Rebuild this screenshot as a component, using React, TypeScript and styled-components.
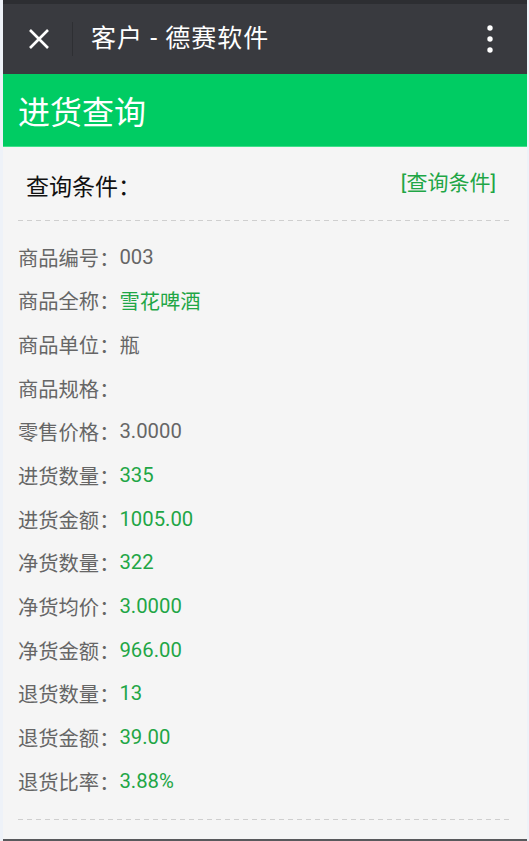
import React from 'react';
import styled, { createGlobalStyle } from 'styled-components';

const GlobalStyle = createGlobalStyle`
  html, body {
    margin: 0;
    padding: 0;
    background: #eef2f8;
  }
  body {
    font-family: Roboto, "Noto Sans CJK SC", "Noto Sans", sans-serif;
  }
`;

const Frame = styled.div`
  box-sizing: border-box;
  height: 841px;
  margin: 0 2px 0 3px;
  width: 524px;
  display: flex;
  flex-direction: column;
  background: #f5f5f5;
  border-bottom: 2px solid #58595c;
  overflow: hidden;
`;

const Toolbar = styled.div`
  box-sizing: border-box;
  height: 74px;
  flex-shrink: 0;
  background: #393a3f;
  border-top: 4px solid #2d2e32;
  display: flex;
  align-items: center;
  padding: 0 22px 0 21px;
`;

const IconButton = styled.div`
  width: 30px;
  height: 30px;
  display: flex;
  align-items: center;
  justify-content: center;
`;

const Divider = styled.div`
  width: 1px;
  height: 34px;
  background: #2e2f33;
  margin: 0 18px 0 18px;
`;

const ToolbarTitle = styled.div`
  flex: 1;
  color: #ffffff;
  font-size: 25px;
  line-height: 30px;
  letter-spacing: 1px;
`;

const PageHeader = styled.div`
  box-sizing: border-box;
  height: 73px;
  flex-shrink: 0;
  background: #00cc63;
  color: #ffffff;
  font-size: 32px;
  display: flex;
  align-items: center;
  padding: 0 15px 0 15px;
  border-bottom: 1px solid #3ee08a;
`;

const Content = styled.div`
  padding: 0 15px 0 15px;
`;

const ConditionBar = styled.div`
  display: flex;
  align-items: center;
  justify-content: space-between;
  height: 73px;
  padding: 0 16px 0 8px;
`;

const ConditionTitle = styled.div`
  font-size: 23px;
  color: #111111;
  margin-top: 2px;
`;

const ConditionLink = styled.a`
  font-size: 21px;
  color: #1fa646;
  text-decoration: none;
  margin-top: -6px;
`;

const Dashed = styled.div`
  height: 1px;
  background-image: linear-gradient(to right, #cfcfcf 55%, transparent 55%);
  background-size: 9px 1px;
  background-repeat: repeat-x;
`;

const InfoList = styled.div`
  display: flex;
  flex-direction: column;
  padding: 14px 0 16px 0;
`;

const Row = styled.div`
  height: 43.67px;
  display: flex;
  align-items: center;
  font-size: 20.3px;
  color: #666666;
`;

const Value = styled.span<{ $green?: boolean }>`
  color: ${(p) => (p.$green ? '#1fa646' : '#666666')};
`;

const rows: { label: string; value: string; green?: boolean }[] = [
  { label: '商品编号', value: '003' },
  { label: '商品全称', value: '雪花啤酒', green: true },
  { label: '商品单位', value: '瓶' },
  { label: '商品规格', value: '' },
  { label: '零售价格', value: '3.0000' },
  { label: '进货数量', value: '335', green: true },
  { label: '进货金额', value: '1005.00', green: true },
  { label: '净货数量', value: '322', green: true },
  { label: '净货均价', value: '3.0000', green: true },
  { label: '净货金额', value: '966.00', green: true },
  { label: '退货数量', value: '13', green: true },
  { label: '退货金额', value: '39.00', green: true },
  { label: '退货比率', value: '3.88%', green: true },
];

export default function App() {
  return (
    <>
      <GlobalStyle />
      <Frame>
        <Toolbar>
          <IconButton>
            <svg width="24" height="24" viewBox="0 0 24 24">
              <path d="M3 3 L21 21 M21 3 L3 21" stroke="#fff" strokeWidth="2.6" strokeLinecap="butt" />
            </svg>
          </IconButton>
          <Divider />
          <ToolbarTitle>客户 - 德赛软件</ToolbarTitle>
          <IconButton>
            <svg width="8" height="30" viewBox="0 0 8 30">
              <circle cx="4" cy="4" r="2.7" fill="#fff" />
              <circle cx="4" cy="15" r="2.7" fill="#fff" />
              <circle cx="4" cy="26" r="2.7" fill="#fff" />
            </svg>
          </IconButton>
        </Toolbar>
        <PageHeader>进货查询</PageHeader>
        <Content>
          <ConditionBar>
            <ConditionTitle>查询条件：</ConditionTitle>
            <ConditionLink href="#">[查询条件]</ConditionLink>
          </ConditionBar>
          <Dashed />
          <InfoList>
            {rows.map((r) => (
              <Row key={r.label}>
                {r.label}：<Value $green={r.green}>{r.value}</Value>
              </Row>
            ))}
          </InfoList>
          <Dashed />
        </Content>
      </Frame>
    </>
  );
}
